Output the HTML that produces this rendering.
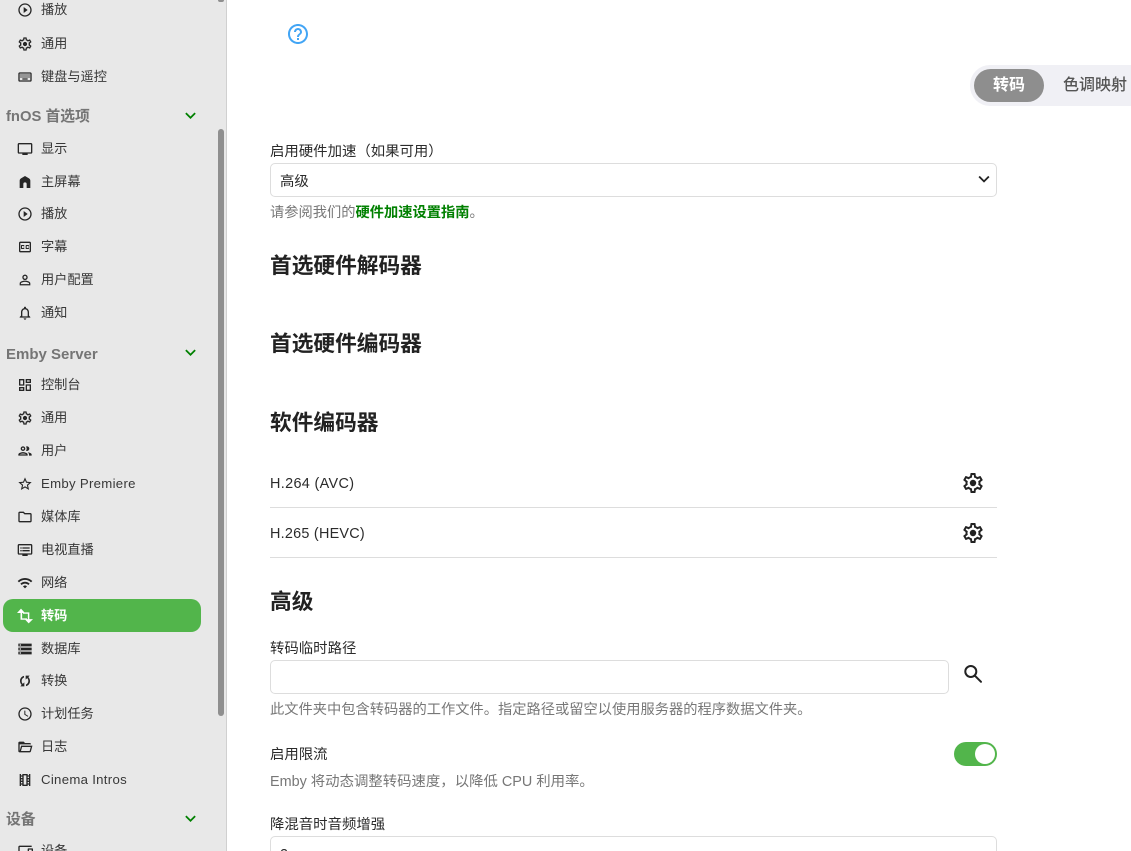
<!DOCTYPE html>
<html lang="zh"><head><meta charset="utf-8"><title>转码</title>
<style>
html,body{margin:0;padding:0;width:1131px;height:851px;overflow:hidden;background:#fff}
body{position:relative;font-family:"Liberation Sans","Noto Sans CJK SC",sans-serif;color:#222}
#side{position:absolute;left:0;top:0;width:226px;height:851px;background:#e8e8e8;border-right:1px solid #d0d0d0;overflow:hidden}
.r{position:absolute;left:41px;font-size:13.2px;line-height:20px;height:20px;color:#383838;white-space:nowrap;margin-top:1px}
.e{letter-spacing:.3px}
.i{position:absolute;left:17px;width:16px;height:16px;fill:#262626;margin-top:1px}
.h{position:absolute;left:6px;font-size:14.8px;line-height:20px;font-weight:700;color:#757575;white-space:nowrap;margin-top:1px}
.c{position:absolute;left:180px;width:21px;height:21px;fill:#008000;margin-top:-1px}
.t{position:absolute;white-space:nowrap;font-size:14.4px;line-height:20px;color:#2b2b2b;margin-top:1px}
.g{color:#777;font-size:14.25px;margin-top:2px}
.b{font-size:21.7px;font-weight:700;line-height:30px;color:#222;margin-top:0}
.box{position:absolute;box-sizing:border-box;border:1px solid #ddd;border-radius:5px;background:#fff}
.ln{position:absolute;left:270px;width:727px;height:1px;background:#ddd}
svg{display:block}
</style></head><body>
<svg width="0" height="0" style="position:absolute"><defs>
<symbol id="play" viewBox="0 0 24 24"><path d="M10 16.5l6-4.5-6-4.5v9zM12 2C6.48 2 2 6.48 2 12s4.48 10 10 10 10-4.48 10-10S17.52 2 12 2zm0 18c-4.41 0-8-3.59-8-8s3.59-8 8-8 8 3.59 8 8-3.59 8-8 8z"/></symbol>
<symbol id="gear" viewBox="0 0 24 24"><path d="M10 22c-.25 0-.46-.18-.5-.42l-.37-2.65c-.63-.25-1.17-.59-1.69-.99l-2.49 1.01c-.22.08-.49 0-.61-.22l-2-3.46c-.13-.22-.07-.49.12-.64L4.57 12.97 4.5 12l.07-1-2.11-1.63c-.19-.15-.25-.42-.12-.64l2-3.46c.12-.22.39-.31.61-.22l2.49 1c.52-.39 1.06-.73 1.69-.98l.37-2.65c.04-.24.25-.42.5-.42h4c.25 0 .46.18.5.42l.37 2.65c.63.25 1.17.59 1.69.98l2.49-1c.22-.09.49 0 .61.22l2 3.46c.13.22.07.49-.12.64L19.43 11l.07 1-.07 1 2.11 1.63c.19.15.25.42.12.64l-2 3.46c-.12.22-.39.31-.61.22l-2.49-1c-.52.39-1.06.73-1.69.98l-.37 2.65c-.04.24-.25.42-.5.42h-4zM11.25 4l-.37 2.61c-1.2.25-2.26.89-3.03 1.78L5.44 7.35l-.75 1.3 2.11 1.55c-.4 1.17-.4 2.44 0 3.6l-2.12 1.56.75 1.3 2.43-1.04c.77.88 1.82 1.52 3.01 1.76l.37 2.62h1.52l.37-2.61c1.19-.25 2.24-.89 3.01-1.77l2.43 1.04.75-1.3-2.12-1.55c.4-1.17.4-2.44 0-3.61l2.11-1.55-.75-1.3-2.41 1.04c-.77-.89-1.83-1.53-3.03-1.77L12.75 4h-1.5z"/><circle cx="12" cy="12" r="3.2"/></symbol>
<symbol id="kbd" viewBox="0 0 24 24"><path d="M20 7v10H4V7h16m0-2H4c-1.1 0-1.99.9-1.99 2L2 17c0 1.1.9 2 2 2h16c1.1 0 2-.9 2-2V7c0-1.1-.9-2-2-2zm-9 3h2v2h-2zm0 3h2v2h-2zM8 8h2v2H8zm0 3h2v2H8zm-3 0h2v2H5zm0-3h2v2H5zm3 6h8v2H8zm6-3h2v2h-2zm0-3h2v2h-2zm3 3h2v2h-2zm0-3h2v2h-2z"/></symbol>
<symbol id="tv" viewBox="0 0 24 24"><path d="M21 3H3c-1.1 0-2 .9-2 2v12c0 1.1.9 2 2 2h5v2h8v-2h5c1.1 0 2-.9 2-2V5c0-1.1-.9-2-2-2zm0 14H3V5h18v12z"/></symbol>
<symbol id="home" viewBox="0 0 24 24"><path d="M12 3L6 6.500C4.700 7.300 4 8.500 4 10v11h5.500v-6a2.500 2.500 0 0 1 5 0v6H20V10c0-1.500-.7-2.700-2-3.500z"/></symbol>
<symbol id="cc" viewBox="0 0 24 24"><path d="M19 4H5c-1.11 0-2 .9-2 2v12c0 1.1.89 2 2 2h14c1.1 0 2-.9 2-2V6c0-1.1-.9-2-2-2zm0 14H5V6h14v12zM7 15h3c.55 0 1-.45 1-1v-1H9.500v.5h-2v-3h2v.5H11v-1c0-.55-.45-1-1-1H7c-.55 0-1 .45-1 1v4c0 .55.45 1 1 1zm7 0h3c.55 0 1-.45 1-1v-1h-1.500v.5h-2v-3h2v.5H18v-1c0-.55-.45-1-1-1h-3c-.55 0-1 .45-1 1v4c0 .55.45 1 1 1z"/></symbol>
<symbol id="user" viewBox="0 0 24 24"><path d="M12 5.900c1.160 0 2.100.94 2.100 2.100s-.94 2.100-2.100 2.100S9.900 9.160 9.900 8s.94-2.100 2.100-2.100m0 9c2.970 0 6.100 1.460 6.100 2.100v1.100H5.900V17c0-.64 3.130-2.100 6.100-2.100M12 4C9.790 4 8 5.790 8 8s1.790 4 4 4 4-1.790 4-4-1.790-4-4-4zm0 9c-2.670 0-8 1.340-8 4v3h16v-3c0-2.660-5.330-4-8-4z"/></symbol>
<symbol id="bell" viewBox="0 0 24 24"><path d="M12 22c1.100 0 2-.9 2-2h-4c0 1.100.9 2 2 2zm6-6v-5c0-3.070-1.630-5.640-4.500-6.320V4c0-.83-.67-1.500-1.500-1.500s-1.500.67-1.500 1.500v.68C7.640 5.360 6 7.920 6 11v5l-2 2v1h16v-1l-2-2zm-2 1H8v-6c0-2.480 1.510-4.500 4-4.500s4 2.020 4 4.500v6z"/></symbol>
<symbol id="dash" viewBox="0 0 24 24"><path d="M19 5v2h-4V5h4M9 5v6H5V5h4m10 8v6h-4v-6h4M9 17v2H5v-2h4M21 3h-8v6h8V3zM11 3H3v10h8V3zm10 8h-8v10h8V11zm-10 4H3v6h8v-6z"/></symbol>
<symbol id="ppl" viewBox="0 0 24 24"><path d="M9 13.750c-2.340 0-7 1.170-7 3.500V19h14v-1.750c0-2.330-4.660-3.500-7-3.500zM4.340 17c.84-.58 2.870-1.250 4.660-1.250s3.820.67 4.660 1.250H4.340zM9 12c1.930 0 3.500-1.570 3.500-3.500S10.930 5 9 5 5.500 6.570 5.500 8.500 7.070 12 9 12zm0-5c.83 0 1.500.67 1.500 1.500S9.830 10 9 10s-1.500-.67-1.500-1.500S8.170 7 9 7zm7.040 6.810c1.160.84 1.960 1.960 1.960 3.440V19h4v-1.750c0-2.020-3.500-3.170-5.960-3.440zM15 12c1.930 0 3.500-1.570 3.500-3.500S16.930 5 15 5c-.54 0-1.040.13-1.500.35.63.89 1 1.980 1 3.150s-.37 2.260-1 3.150c.46.22.96.35 1.500.35z"/></symbol>
<symbol id="star" viewBox="0 0 24 24"><path d="M22 9.240l-7.190-.62L12 2 9.190 8.630 2 9.240l5.460 4.730L5.820 21 12 17.270 18.180 21l-1.630-7.030L22 9.240zM12 15.400l-3.760 2.270 1-4.280-3.320-2.880 4.380-.38L12 6.100l1.710 4.040 4.380.38-3.320 2.880 1 4.280L12 15.400z"/></symbol>
<symbol id="fold" viewBox="0 0 24 24"><path d="M9.170 6l2 2H20v10H4V6h5.170M10 4H4c-1.100 0-1.990.9-1.990 2L2 18c0 1.100.9 2 2 2h16c1.100 0 2-.9 2-2V8c0-1.100-.9-2-2-2h-8l-2-2z"/></symbol>
<symbol id="dvr" viewBox="0 0 24 24"><path d="M21 3H3c-1.100 0-2 .9-2 2v12c0 1.100.9 2 2 2h5v2h8v-2h5c1.100 0 1.990-.9 1.990-2L23 5c0-1.100-.9-2-2-2zm0 14H3V5h18v12zm-2-9H8v2h11V8zm0 4H8v2h11v-2zM7 8H5v2h2V8zm0 4H5v2h2v-2z"/></symbol>
<symbol id="wifi" viewBox="0 0 24 24"><path d="M1 9l2 2c4.970-4.970 13.030-4.970 18 0l2-2C16.930 2.930 7.080 2.930 1 9zm8 8l3 3 3-3c-1.650-1.660-4.340-1.660-6 0zm-4-4l2 2c2.760-2.760 7.240-2.760 10 0l2-2C15.140 9.140 8.870 9.140 5 13z"/></symbol>
<symbol id="trans" viewBox="0 0 24 24"><path d="M6 1l6 6.500H7.700v8H15v2.200H5.300V7.500H0zM17.500 23l-6-6.300h4.800V8.700H9V6.500h9.500v10.200H24z"/></symbol>
<symbol id="db" viewBox="0 0 24 24"><path d="M2 20h20v-4H2v4zm2-3h2v2H4v-2zM2 4v4h20V4H2zm4 3H4V5h2v2zm-4 7h20v-4H2v4zm2-3h2v2H4v-2z"/></symbol>
<symbol id="sync" viewBox="0 0 24 24"><path d="M10.500 4.300C7 5 4.500 8.100 4.500 12c0 2.300 1 4.400 2.500 5.800L5 20h6v-6l-2.300 2.300C7.500 15.200 7 13.700 7 12c0-2.500 1.500-4.500 3.500-5.200V4.300zM13.500 19.700c3.500-.7 6-3.800 6-7.700 0-2.300-1-4.400-2.500-5.800L19 4h-6v6l2.300-2.300C16.500 8.800 17 10.300 17 12c0 2.500-1.500 4.500-3.500 5.200v2.500z"/></symbol>
<symbol id="clock" viewBox="0 0 24 24"><path d="M11.990 2C6.470 2 2 6.480 2 12s4.470 10 9.990 10C17.520 22 22 17.520 22 12S17.520 2 11.990 2zM12 20c-4.420 0-8-3.580-8-8s3.580-8 8-8 8 3.580 8 8-3.580 8-8 8zm.5-13H11v6l5.250 3.150.75-1.230-4.500-2.670z"/></symbol>
<symbol id="open" viewBox="0 0 24 24"><path d="M6.100 10L4 18V8h17a2 2 0 0 0-2-2h-7l-2-2H4a2 2 0 0 0-2 2v12a2 2 0 0 0 2 2h15c.9 0 1.700-.6 1.900-1.500L23.200 10H6.100M19 18H6l1.600-6h13L19 18z"/></symbol>
<symbol id="film" viewBox="0 0 24 24"><path d="M18 3v2h-2V3H8v2H6V3H4v18h2v-2h2v2h8v-2h2v2h2V3h-2zM8 17H6v-2h2v2zm0-4H6v-2h2v2zm0-4H6V7h2v2zm6 10h-4V5h4v14zm4-2h-2v-2h2v2zm0-4h-2v-2h2v2zm0-4h-2V7h2v2z"/></symbol>
<symbol id="chev" viewBox="0 0 24 24"><path d="M7.410 8.590L12 13.170l4.590-4.580L18 10l-6 6-6-6z"/></symbol>
<symbol id="dev" viewBox="0 0 24 24"><path d="M4 6h18V4H4c-1.100 0-2 .9-2 2v11H0v3h14v-3H4V6zm19 2h-6c-.55 0-1 .45-1 1v10c0 .55.45 1 1 1h6c.55 0 1-.45 1-1V9c0-.55-.45-1-1-1zm-1 9h-4v-7h4v7z"/></symbol>
</defs></svg>

<div id="side">
<svg class="i" style="top:1px"><use href="#play"/></svg><div class="r" style="top:-1px">播放</div>
<svg class="i" style="top:35px"><use href="#gear"/></svg><div class="r" style="top:33px">通用</div>
<svg class="i" style="top:68px"><use href="#kbd"/></svg><div class="r" style="top:66px">键盘与遥控</div>
<div class="h" style="top:106px">fnOS 首选项</div><svg class="c" style="top:106px"><use href="#chev"/></svg>
<svg class="i" style="top:140px"><use href="#tv"/></svg><div class="r" style="top:138px">显示</div>
<svg class="i" style="top:173px"><use href="#home"/></svg><div class="r" style="top:171px">主屏幕</div>
<svg class="i" style="top:205px"><use href="#play"/></svg><div class="r" style="top:203px">播放</div>
<svg class="i" style="top:238px"><use href="#cc"/></svg><div class="r" style="top:236px">字幕</div>
<svg class="i" style="top:271px"><use href="#user"/></svg><div class="r" style="top:269px">用户配置</div>
<svg class="i" style="top:304px"><use href="#bell"/></svg><div class="r" style="top:302px">通知</div>
<div class="h" style="top:344px;font-size:15px">Emby Server</div><svg class="c" style="top:343px"><use href="#chev"/></svg>
<svg class="i" style="top:376px"><use href="#dash"/></svg><div class="r" style="top:374px">控制台</div>
<svg class="i" style="top:409px"><use href="#gear"/></svg><div class="r" style="top:407px">通用</div>
<svg class="i" style="top:442px"><use href="#ppl"/></svg><div class="r" style="top:440px">用户</div>
<svg class="i" style="top:475px"><use href="#star"/></svg><div class="r e" style="top:473px">Emby Premiere</div>
<svg class="i" style="top:508px"><use href="#fold"/></svg><div class="r" style="top:506px">媒体库</div>
<svg class="i" style="top:541px"><use href="#dvr"/></svg><div class="r" style="top:539px">电视直播</div>
<svg class="i" style="top:574px"><use href="#wifi"/></svg><div class="r" style="top:572px">网络</div>
<div style="position:absolute;left:3px;top:599px;width:198px;height:33px;border-radius:10px;background:#52b54b"></div>
<svg class="i" style="top:607px;fill:#fff"><use href="#trans"/></svg><div class="r" style="top:605px;color:#fff;font-weight:700">转码</div>
<svg class="i" style="top:640px"><use href="#db"/></svg><div class="r" style="top:638px">数据库</div>
<svg class="i" style="top:672px"><use href="#sync"/></svg><div class="r" style="top:670px">转换</div>
<svg class="i" style="top:705px"><use href="#clock"/></svg><div class="r" style="top:703px">计划任务</div>
<svg class="i" style="top:738px"><use href="#open"/></svg><div class="r" style="top:736px">日志</div>
<svg class="i" style="top:771px"><use href="#film"/></svg><div class="r e" style="top:769px">Cinema Intros</div>
<div class="h" style="top:809px">设备</div><svg class="c" style="top:809px"><use href="#chev"/></svg>
<svg class="i" style="top:842px"><use href="#dev"/></svg><div class="r" style="top:840px">设备</div>
<div style="position:absolute;left:218px;top:0;width:6px;height:2px;background:#8f8f8f;border-radius:0 0 3px 3px"></div>
<div style="position:absolute;left:218px;top:129px;width:6px;height:587px;background:#8f8f8f;border-radius:3px"></div>
</div>

<svg style="position:absolute;left:286px;top:22px;fill:#42a5f5" width="24" height="24" viewBox="0 0 24 24"><path d="M11 18h2v-2h-2v2zm1-16C6.480 2 2 6.480 2 12s4.480 10 10 10 10-4.480 10-10S17.520 2 12 2zm0 18c-4.410 0-8-3.590-8-8s3.590-8 8-8 8 3.590 8 8-3.590 8-8 8zm0-14c-2.210 0-4 1.790-4 4h2c0-1.100.9-2 2-2s2 .9 2 2c0 2-3 1.750-3 5h2c0-2.250 3-2.500 3-5 0-2.210-1.790-4-4-4z"/></svg>

<div style="position:absolute;left:970px;top:65px;width:161px;height:41px;background:#f0f0f5;border-radius:20px 0 0 20px"></div>
<div style="position:absolute;left:974px;top:69px;width:70px;height:33px;background:#8e8e8e;border-radius:17px"></div>
<div class="t" style="left:993px;top:75px;font-size:16px;font-weight:700;color:#fff">转码</div>
<div class="t" style="left:1063px;top:75px;font-size:16px;font-weight:500;color:#555">色调映射</div>

<div class="t" style="left:270px;top:141px">启用硬件加速（如果可用）</div>
<div class="box" style="left:270px;top:163px;width:727px;height:34px"></div>
<div class="t" style="left:280px;top:171px">高级</div>
<svg style="position:absolute;left:973px;top:168px;fill:#222" width="22" height="22" viewBox="0 0 24 24"><use href="#chev"/></svg>
<div class="t g" style="left:270px;top:201px">请参阅我们的<b style="color:#008000">硬件加速设置指南</b>。</div>

<div class="t b" style="left:270px;top:251px">首选硬件解码器</div>
<div class="t b" style="left:270px;top:329px">首选硬件编码器</div>
<div class="t b" style="left:270px;top:408px">软件编码器</div>

<div class="t" style="left:270px;top:473px;letter-spacing:.35px">H.264 (AVC)</div>
<svg style="position:absolute;left:961px;top:471px;fill:#222" width="24" height="24"><use href="#gear"/></svg>
<div class="ln" style="top:507px"></div>
<div class="t" style="left:270px;top:523px;letter-spacing:.25px">H.265 (HEVC)</div>
<svg style="position:absolute;left:961px;top:521px;fill:#222" width="24" height="24"><use href="#gear"/></svg>
<div class="ln" style="top:557px"></div>

<div class="t b" style="left:270px;top:587px">高级</div>
<div class="t" style="left:270px;top:638px">转码临时路径</div>
<div class="box" style="left:270px;top:660px;width:679px;height:34px"></div>
<svg style="position:absolute;left:960px;top:660px" width="26" height="26" fill="none" stroke="#222" stroke-width="2"><circle cx="10.8" cy="11.500" r="5.500"/><path d="M15 15.800l6 6" stroke-linecap="round"/></svg>
<div class="t g" style="left:270px;top:698px">此文件夹中包含转码器的工作文件。指定路径或留空以使用服务器的程序数据文件夹。</div>

<div class="t" style="left:270px;top:744px">启用限流</div>
<div style="position:absolute;left:954px;top:742px;width:43px;height:24px;border-radius:12px;background:#52b54b"></div>
<div style="position:absolute;left:975px;top:744px;width:20px;height:20px;border-radius:50%;background:#fff"></div>
<div class="t g" style="left:270px;top:770px;font-size:14.4px">Emby 将动态调整转码速度，以降低 CPU 利用率。</div>

<div class="t" style="left:270px;top:814px">降混音时音频增强</div>
<div class="box" style="left:270px;top:836px;width:727px;height:34px"></div>
<div class="t" style="left:280px;top:844px">2</div>
</body></html>
